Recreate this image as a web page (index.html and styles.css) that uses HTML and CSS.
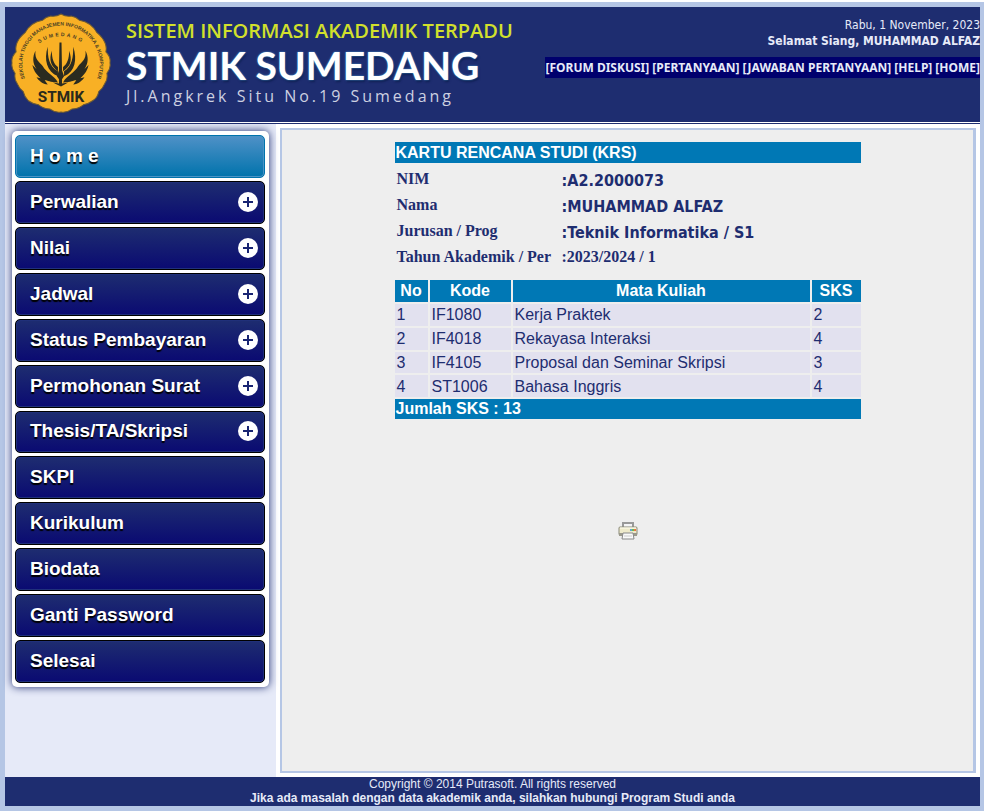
FILE: index.html
```html
<!DOCTYPE html>
<html lang="id">
<head>
<meta charset="utf-8">
<title>Sistem Informasi Akademik Terpadu</title>
<link rel="stylesheet" href="styles.css">
</head>
<body>
<div class="page">
  <header class="header">
    <div class="brand">
      <svg class="logo" viewBox="1 1 98 98" role="img" aria-label="STMIK">
        <defs>
          <path id="arc-outer" d="M22 77A38 38 0 1 1 78 77"/>
          <path id="arc-inner" d="M27 32A36 36 0 0 1 73 32"/>
        </defs>
        <path class="seal" d="M50 2Q55 5 60 4Q65 5 68 8Q74 9 78 12Q83 16 85 20Q91 25 93 30Q95 34 94 39Q99 44 98 50Q99 55 95 60Q96 66 93 70Q91 75 87 78Q86 84 81 87Q77 90 72 91Q67 95 61 95Q56 99 50 98Q44 99 39 95Q33 95 28 91Q22 90 18 87Q14 83 13 78Q9 75 7 70Q4 66 5 60Q1 55 2 50Q1 44 6 39Q5 34 7 30Q9 25 15 20Q17 16 22 12Q26 9 32 8Q35 5 40 4Q45 5 50 2Z"/>
        <text class="seal-text"><textPath href="#arc-outer" startOffset="50%" text-anchor="middle">SEKOLAH TINGGI MANAJEMEN INFORMATIKA &amp; KOMPUTER</textPath></text>
        <text class="seal-city"><textPath href="#arc-inner" startOffset="50%" text-anchor="middle">SUMEDANG</textPath></text>
        <g class="emblem">
          <path d="M48.500 30H50.500L51 57L53 63L51 66V70L57 69L50 73L42 69L48 70V66L46 63L48 57Z"/>
          <path d="M37 34C37 44 38 53 47 58L47 63C36 58 33 47 37 34ZM62 34C62 44 61 53 53 58L53 63C64 58 66 47 62 34Z"/>
          <path d="M41 38C41 46 43 51 47 54V58C40 53 38 47 41 38ZM58 38C58 46 56 51 52 54V58C60 53 61 47 58 38Z"/>
          <path d="M25 38C24 47 29 49 32 53C36 60 43 62 47 69C39 69 37 67 34 67L37 71C32 71 28 67 26 64L30 65C25 60 23 57 22 52L26 56C22 50 22 44 25 38Z"/>
          <path d="M74 38C75 47 70 49 67 53C63 60 56 62 52 69C60 69 62 67 65 67L62 71C67 71 71 67 73 64L69 65C74 60 76 57 77 52L73 56C77 50 77 44 74 38Z"/>
        </g>
        <text class="seal-name" x="50" y="88" text-anchor="middle">STMIK</text>
      </svg>
      <div class="titles">
        <div class="system">SISTEM INFORMASI AKADEMIK TERPADU</div>
        <h1 class="campus">STMIK SUMEDANG</h1>
        <div class="address">Jl.Angkrek Situ No.19 Sumedang</div>
      </div>
    </div>
    <div class="session">
      <div>Rabu, 1 November, 2023</div>
      <div class="greeting">Selamat Siang, MUHAMMAD ALFAZ</div>
      <nav class="topnav">
        <a href="#">[FORUM DISKUSI]</a>
        <a href="#">[PERTANYAAN]</a>
        <a href="#">[JAWABAN PERTANYAAN]</a>
        <a href="#">[HELP]</a>
        <a href="#">[HOME]</a>
      </nav>
    </div>
  </header>

  <div class="main">
    <aside class="sidebar">
      <nav class="menu">
        <a class="item active" href="#">H o m e</a>
        <a class="item" href="#">Perwalian<span class="plus"></span></a>
        <a class="item" href="#">Nilai<span class="plus"></span></a>
        <a class="item" href="#">Jadwal<span class="plus"></span></a>
        <a class="item" href="#">Status Pembayaran<span class="plus"></span></a>
        <a class="item" href="#">Permohonan Surat<span class="plus"></span></a>
        <a class="item" href="#">Thesis/TA/Skripsi<span class="plus"></span></a>
        <a class="item" href="#">SKPI</a>
        <a class="item" href="#">Kurikulum</a>
        <a class="item" href="#">Biodata</a>
        <a class="item" href="#">Ganti Password</a>
        <a class="item" href="#">Selesai</a>
      </nav>
    </aside>

    <main class="content">
      <section class="card">
        <h2 class="card-title">KARTU RENCANA STUDI (KRS)</h2>
        <dl class="identity">
          <dt>NIM</dt><dd>:A2.2000073</dd>
          <dt>Nama</dt><dd>:MUHAMMAD ALFAZ</dd>
          <dt>Jurusan / Prog</dt><dd>:Teknik Informatika / S1</dd>
          <dt>Tahun Akademik / Per</dt><dd class="term">:2023/2024 / 1</dd>
        </dl>
        <table class="courses">
          <thead>
            <tr><th class="no">No</th><th class="code">Kode</th><th>Mata Kuliah</th><th class="credits">SKS</th></tr>
          </thead>
          <tbody>
            <tr><td>1</td><td>IF1080</td><td>Kerja Praktek</td><td>2</td></tr>
            <tr><td>2</td><td>IF4018</td><td>Rekayasa Interaksi</td><td>4</td></tr>
            <tr><td>3</td><td>IF4105</td><td>Proposal dan Seminar Skripsi</td><td>3</td></tr>
            <tr><td>4</td><td>ST1006</td><td>Bahasa Inggris</td><td>4</td></tr>
          </tbody>
          <tfoot>
            <tr><td colspan="4">Jumlah SKS : 13</td></tr>
          </tfoot>
        </table>
      </section>
      <button class="print" type="button" aria-label="Cetak">
        <svg viewBox="0 0 20 20" width="20" height="20">
          <path d="M5 2H15V8H5Z" fill="#f4f4f6" stroke="#999" stroke-width="2"/>
          <rect x="1" y="6" width="18" height="8" rx="1" fill="#eeeacb" stroke="#8b8a78"/>
          <path d="M2 7H18" stroke="#fffef0"/>
          <path d="M1 12H19V15H1Z" fill="#9a998c"/>
          <path d="M5 12H15L16 18H4Z" fill="#fafafa" stroke="#888"/>
          <path d="M6 15H14" stroke="#ccc"/>
          <rect x="12" y="8" width="2" height="2" fill="#5da9d6"/>
          <rect x="14" y="8" width="2" height="2" fill="#72b94e"/>
          <rect x="16" y="8" width="2" height="2" fill="#ee7443"/>
        </svg>
      </button>
    </main>
  </div>

  <footer class="footer">
    <div>Copyright © 2014 Putrasoft. All rights reserved</div>
    <div class="help">Jika ada masalah dengan data akademik anda, silahkan hubungi Program Studi anda</div>
  </footer>
</div>
</body>
</html>
```
FILE: styles.css
```css
* { box-sizing: border-box; }

body {
  margin: 0;
  padding: 2px 2px 0 0;
  background: #fff;
  color: #1e2d70;
  font-family: "Liberation Sans", Arial, sans-serif;
}

a { color: inherit; text-decoration: none; }

.page {
  display: flex;
  flex-direction: column;
  min-height: calc(100vh - 2px);
  border: 5px solid #b5c6e5;
  border-right-width: 4px;
}

.header {
  display: flex;
  justify-content: space-between;
  height: 115px;
  background: #1e2d70;
  color: #e6eaf8;
}

.brand { display: flex; }

.logo {
  width: 100px;
  height: 100px;
  margin: 6px 0 0 6px;
}

.seal { fill: #f8b025; stroke: #6b5a35; stroke-width: 1; }
.seal-text { font: bold 5px "Liberation Sans", sans-serif; fill: #4c4024; }
.seal-city { font: bold 5px "Liberation Sans", sans-serif; letter-spacing: 2px; fill: #4c4024; }
.seal-name { font: bold 15px "Roboto", sans-serif; fill: #2a291c; }
.emblem { fill: #2a2b20; }

.titles {
  padding: 12px 0 0 15px;
  font-family: "Open Sans", sans-serif;
  white-space: nowrap;
}

.system {
  font-size: 20px;
  line-height: 24px;
  font-weight: 600;
  color: #d2e02c;
}

.campus {
  margin: 0;
  font-family: Lato, sans-serif;
  font-size: 39px;
  line-height: 44px;
  font-weight: bold;
  color: #fff;
  text-shadow: 0 0 2px #4da3dc, 1px 2px 2px #0d1c4e;
}

.address {
  font-size: 16px;
  line-height: 18px;
  letter-spacing: 3px;
  color: #ccd0e0;
}

.session {
  padding-top: 10px;
  font-family: "DejaVu Sans Condensed", Tahoma, sans-serif;
  font-stretch: condensed;
  font-size: 12px;
  line-height: 16px;
  text-align: right;
  white-space: nowrap;
}

.greeting { font-weight: bold; }

.topnav {
  display: flex;
  justify-content: flex-end;
  gap: 3px;
  margin-top: 8px;
  background: #00006d;
  font-family: "Noto Sans", sans-serif;
  font-stretch: normal;
  line-height: 21px;
  font-weight: bold;
}

.main {
  display: flex;
  flex: 1;
  margin-top: 1px;
  border-top: 1px solid #1e2d70;
}

.sidebar {
  width: 271px;
  flex: none;
  padding: 7px;
  background: #e6eaf8;
}

.menu {
  display: grid;
  grid-auto-rows: 1fr;
  gap: 3px;
  min-height: 556px;
  padding: 4px 4px 4px 3px;
  background: #fff;
  border-radius: 5px;
  box-shadow: 0 0 8px #1e2d70;
}

.item {
  display: flex;
  align-items: center;
  justify-content: space-between;
  padding: 0 6px 1px 14px;
  border: 1px solid #000;
  border-radius: 5px;
  background: linear-gradient(#1e2d70, #0a0a72);
  box-shadow: inset 0 0 0 1px #20307a;
  color: #fff;
  font-size: 19px;
  font-weight: bold;
  text-shadow: 0 2px 1px #000;
}

.active {
  border-color: #0073ac;
  background: linear-gradient(#4f91c7, #0073ac);
  box-shadow: inset 0 0 0 1px #4b93c5;
}

.plus {
  width: 20px;
  height: 20px;
  border-radius: 50%;
  background:
    linear-gradient(#182472, #182472) center / 10px 2px no-repeat,
    linear-gradient(#182472, #182472) center / 2px 10px no-repeat,
    #fff;
}

.content {
  display: flex;
  flex: 1;
  flex-direction: column;
  align-items: center;
  margin: 4px;
  padding-top: 12px;
  border: 2px solid #b5c6e5;
  border-right-width: 3px;
  background: #eee;
}

.card { width: 466px; }

.card-title {
  margin: 0;
  padding-left: 1px;
  background: #0078b5;
  color: #fff;
  font-size: 16px;
  line-height: 21px;
}

.identity {
  display: grid;
  grid-template-columns: 165px 1fr;
  grid-auto-rows: 26px;
  margin: 3px 0 8px 2px;
  font-weight: bold;
}

.identity dt,
.identity .term {
  font-family: "Liberation Serif", "Times New Roman", serif;
  font-size: 16px;
  line-height: 26px;
}

.identity dd {
  margin: 0;
  font-family: "DejaVu Sans Condensed", Tahoma, sans-serif;
  font-stretch: condensed;
  font-size: 16px;
  line-height: 30px;
}

.courses {
  width: 470px;
  height: 143px;
  margin: 0 -2px;
  border-spacing: 2px;
  table-layout: fixed;
  font-size: 16px;
  line-height: 20px;
}

.courses th,
.courses tfoot td {
  background: #0078b5;
  color: #fff;
  font-weight: bold;
}

.courses th { padding: 1px 0; }
.courses td { padding: 0 1px; background: #e2e1ef; }
.courses tbody td { padding: 1px 2px 0; }
.no { width: 33px; }
.code { width: 81px; }
.credits { width: 49px; }

.print {
  margin-top: 100px;
  padding: 0;
  border: 0;
  background: none;
  line-height: 0;
}

.footer {
  height: 29px;
  background: #1e2d70;
  color: #e6eaf8;
  font-size: 12px;
  line-height: 14px;
  text-align: center;
}

.help { font-weight: bold; }
```
